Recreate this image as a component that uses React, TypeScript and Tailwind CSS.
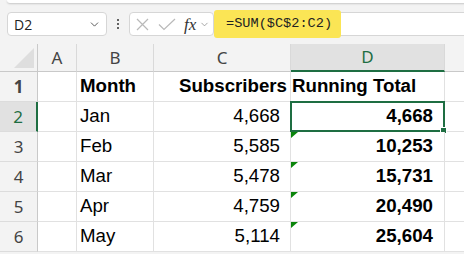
import { ChevronDown } from "lucide-react";

const cols = [
  { key: "A", w: "w-[39px]" },
  { key: "B", w: "w-[77px]" },
  { key: "C", w: "w-[137px]" },
  { key: "D", w: "w-[154px]" },
];

const rows = [
  { month: "Jan", subs: "4,668", total: "4,668" },
  { month: "Feb", subs: "5,585", total: "10,253" },
  { month: "Mar", subs: "5,478", total: "15,731" },
  { month: "Apr", subs: "4,759", total: "20,490" },
  { month: "May", subs: "5,114", total: "25,604" },
];

const cellFont = { fontFamily: '"Liberation Sans", Arial, sans-serif' };
const headFont = { fontFamily: '"Noto Sans", "Open Sans", sans-serif' };

function RowHead({ n, active }: { n: number; active?: boolean }) {
  return (
    <div
      style={headFont}
      className={`flex h-full w-[38px] shrink-0 items-center justify-center border-b border-[#dcdcdc] text-[17px] ${
        active
          ? "border-r-2 border-r-[#1e6e42] bg-[#e1e1e1] text-[#1e6e42]"
          : "border-r border-r-[#c9c9c9] bg-[#f3f3f3] text-[#444]"
      }`}
    >
      {n}
    </div>
  );
}

function Flag() {
  return (
    <span className="absolute left-0 top-0 h-0 w-0 border-r-[7px] border-t-[6px] border-r-transparent border-t-[#0a850a]" />
  );
}

export default function App() {
  return (
    <div className="h-[254px] w-[464px] overflow-hidden bg-[#f3f3f3]">
      {/* ribbon edge */}
      <div className="-mr-2 ml-[7px] h-[3px] rounded-bl-md bg-white shadow-[0_1px_2px_rgba(0,0,0,0.18)]" />

      {/* formula bar */}
      <div className="mt-[9px] flex h-[24px] items-center">
        <div className="ml-[7px] flex h-full w-[100px] items-center justify-between rounded-[4px] border border-[#d6d6d6] bg-white pl-[6px] pr-[5px]">
          <span style={{ fontFamily: '"Open Sans", sans-serif' }} className="text-[14px] text-[#222]">
            D2
          </span>
          <ChevronDown className="h-[13px] w-[13px] text-[#444]" strokeWidth={1.6} />
        </div>
        <div className="flex w-[22px] flex-col items-center gap-[2px]">
          <span className="h-[2px] w-[2px] rounded-full bg-[#333]" />
          <span className="h-[2px] w-[2px] rounded-full bg-[#333]" />
          <span className="h-[2px] w-[2px] rounded-full bg-[#333]" />
        </div>
        <div className="flex h-full w-[85px] items-center rounded-[4px] border border-[#d6d6d6] bg-white pl-[5px]">
          <svg width="13" height="13" viewBox="0 0 13 13" className="ml-[1px]">
            <path d="M1 1 L12 12 M12 1 L1 12" stroke="#b9b9b9" strokeWidth="1.2" fill="none" />
          </svg>
          <svg width="18" height="13" viewBox="0 0 18 13" className="ml-[9px]">
            <path d="M1 6.5 L6 11.5 L17 1" stroke="#b9b9b9" strokeWidth="1.2" fill="none" />
          </svg>
          <span
            style={{ fontFamily: '"Liberation Serif", "Times New Roman", serif' }}
            className="ml-[8px] text-[17px] italic leading-none text-[#333]"
          >
            fx
          </span>
          <ChevronDown className="ml-[3px] h-[11px] w-[11px] text-[#888]" strokeWidth={1.6} />
        </div>
        <div className="flex h-full flex-1 items-center border-y border-l border-[#d6d6d6] bg-white">
          <div className="-my-[2px] -ml-px flex h-[28px] w-[127px] items-center rounded-[3px] bg-[#fbe555] pl-[12px]">
            <span
              style={{ fontFamily: '"Liberation Mono", "DejaVu Sans Mono", monospace' }}
              className="text-[13.6px] text-[#222]"
            >
              =SUM($C$2:C2)
            </span>
          </div>
        </div>
      </div>

      {/* sheet */}
      <div className="mt-[8px]">
        {/* column headers */}
        <div className="flex h-[28px]">
          <div className="flex w-[38px] shrink-0 items-end justify-end border-b border-r border-[#c9c9c9] pb-[3px] pr-[3px]">
            <span className="h-0 w-0 border-b-[20px] border-l-[20px] border-b-[#dedede] border-l-transparent" />
          </div>
          {cols.map((c) => {
            const active = c.key === "D";
            return (
              <div
                key={c.key}
                style={headFont}
                className={`${c.w} flex shrink-0 items-center justify-center border-r border-r-[#d9d9d9] text-[17px] ${
                  active
                    ? "border-b-2 border-b-[#1e6e42] bg-[#e1e1e1] text-[#1e6e42]"
                    : "border-b border-b-[#c9c9c9] text-[#444]"
                }`}
              >
                {c.key}
              </div>
            );
          })}
          <div className="flex-1 border-b border-[#c9c9c9]" />
        </div>

        {/* row 1 */}
        <div style={cellFont} className="flex h-[30px] text-[18.7px] font-bold text-black">
          <RowHead n={1} />
          <div className="w-[39px] shrink-0 border-b border-r border-[#e1e1e1] bg-white" />
          <div className="flex w-[77px] shrink-0 items-center border-b border-r border-[#e1e1e1] bg-white pl-[3px]">
            Month
          </div>
          <div className="flex w-[137px] shrink-0 items-center justify-end overflow-visible whitespace-nowrap border-b border-r border-[#e1e1e1] bg-white pr-[3px]">
            Subscribers
          </div>
          <div className="flex w-[154px] shrink-0 items-center whitespace-nowrap border-b border-r border-[#e1e1e1] bg-white pl-[1px]">
            Running Total
          </div>
          <div className="flex-1 border-b border-[#e1e1e1] bg-white" />
        </div>

        {rows.map((r, i) => {
          const n = i + 2;
          const selected = n === 2;
          return (
            <div key={r.month} style={cellFont} className="flex h-[30px] text-[18.7px] text-black">
              <RowHead n={n} active={selected} />
              <div className="w-[39px] shrink-0 border-b border-r border-[#e1e1e1] bg-white" />
              <div className="flex w-[77px] shrink-0 items-center border-b border-r border-[#e1e1e1] bg-white pl-[3px]">
                {r.month}
              </div>
              <div className="flex w-[137px] shrink-0 items-center justify-end border-b border-r border-[#e1e1e1] bg-white pr-[10px]">
                {r.subs}
              </div>
              <div className="relative flex w-[154px] shrink-0 items-center justify-end border-b border-r border-[#e1e1e1] bg-white pr-[11px] font-bold">
                {!selected && <Flag />}
                {r.total}
                {selected && (
                  <span className="absolute -bottom-px -left-px -right-px -top-px border-2 border-[#1e6e42]">
                    <span className="absolute -bottom-[4px] -right-[4px] h-[7px] w-[7px] border border-white bg-[#1e6e42]" />
                  </span>
                )}
              </div>
              <div className="flex-1 border-b border-[#e1e1e1] bg-white" />
            </div>
          );
        })}
      </div>
    </div>
  );
}
